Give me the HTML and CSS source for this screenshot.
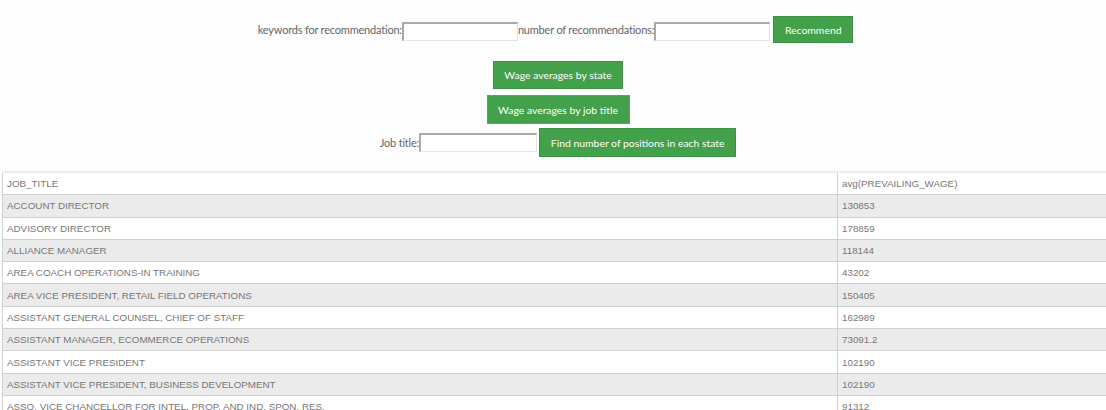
FILE: index.html
```html
<!DOCTYPE html>
<html>
<head>
<meta charset="utf-8">
<link rel="stylesheet" href="styles.css">
</head>
<body>
<div class="controls">
  <div class="row row-rec">
    <label class="lbl">keywords for recommendation:</label><input class="field" type="text"><label class="lbl">number of recommendations:</label><input class="field" type="text"><button class="btn btn-rec">Recommend</button>
  </div>
  <div class="row row-state">
    <button class="btn btn-state">Wage averages by state</button>
  </div>
  <div class="row row-job">
    <button class="btn btn-job">Wage averages by job title</button>
  </div>
  <div class="row row-find">
    <label class="lbl">Job title:</label><input class="field field-job" type="text"><button class="btn btn-find">Find number of positions in each state</button>
  </div>
</div>
<table class="data">
  <thead>
    <tr><td class="c1">JOB_TITLE</td><td class="c2">avg(PREVAILING_WAGE)</td></tr>
  </thead>
  <tbody>
    <tr><td>ACCOUNT DIRECTOR</td><td>130853</td></tr>
    <tr><td>ADVISORY DIRECTOR</td><td>178859</td></tr>
    <tr><td>ALLIANCE MANAGER</td><td>118144</td></tr>
    <tr><td>AREA COACH OPERATIONS-IN TRAINING</td><td>43202</td></tr>
    <tr><td>AREA VICE PRESIDENT, RETAIL FIELD OPERATIONS</td><td>150405</td></tr>
    <tr><td>ASSISTANT GENERAL COUNSEL, CHIEF OF STAFF</td><td>162989</td></tr>
    <tr><td>ASSISTANT MANAGER, ECOMMERCE OPERATIONS</td><td>73091.2</td></tr>
    <tr><td>ASSISTANT VICE PRESIDENT</td><td>102190</td></tr>
    <tr><td>ASSISTANT VICE PRESIDENT, BUSINESS DEVELOPMENT</td><td>102190</td></tr>
    <tr><td>ASSO. VICE CHANCELLOR FOR INTEL. PROP. AND IND. SPON. RES.</td><td>91312</td></tr>
  </tbody>
</table>
</body>
</html>
```

FILE: styles.css
```css
html, body {
  margin: 0;
  padding: 0;
  overflow: hidden;
  background: #fdfdfd;
}
body {
  font-family: Lato, "Open Sans", sans-serif;
  font-size: 11px;
  color: #5a5a5a;
}
.controls {
  display: flex;
  flex-direction: column;
  align-items: center;
  padding-top: 16px;
}
.row {
  display: flex;
  align-items: center;
  justify-content: center;
}
.row-rec { margin-left: 5px; }
.row-state { margin-top: 18px; margin-left: 10px; }
.row-job { margin-top: 6px; margin-left: 10px; }
.row-find { margin-top: 4px; margin-bottom: 14px; margin-left: 10px; }
.lbl {
  color: #666;
  font-size: 11px;
  letter-spacing: -0.2px;
}
.field {
  width: 113px;
  height: 16px;
  padding: 0;
  margin: 0;
  border-top: 2px solid #a9a9a9;
  border-left: 2px solid #a9a9a9;
  border-right: 1px solid #e4e4e4;
  border-bottom: 1px solid #e4e4e4;
  background: #fff;
  margin-top: 4px;
}
.field-job { width: 115px; margin-top: 0; }
.btn {
  font-family: Lato, "Open Sans", sans-serif;
  font-size: 10.4px;
  color: #fff;
  background: #43a04b;
  border: 1px solid #3b9343;
  padding: 0;
  margin: 0;
  cursor: pointer;
}
.btn-rec {
  width: 80px;
  height: 27px;
  margin-left: 3px;
}
.btn-state {
  width: 130px;
  height: 28px;
}
.btn-job {
  width: 143px;
  height: 29px;
  border: 1px solid #5b8fc2;
}
.btn-find {
  width: 197px;
  height: 29px;
  margin-left: 2px;
}
.data {
  margin-left: 2px;
  width: 1120px;
  border-collapse: collapse;
  font-family: "Liberation Sans", Arial, sans-serif;
  font-size: 9.8px;
  color: #777;
}
.data td {
  height: 21.3px;
  padding: 0 0 0 4px;
  border: 1px solid #d0d0d0;
  vertical-align: middle;
  white-space: nowrap;
}
.data td.c1 { width: 830px; }
.data thead td {
  background: #fff;
  border-top: 2px solid #ececec;
}
.data tbody tr:nth-child(odd) td { background: #ebebeb; }
.data tbody tr:nth-child(even) td { background: #fff; }
```
